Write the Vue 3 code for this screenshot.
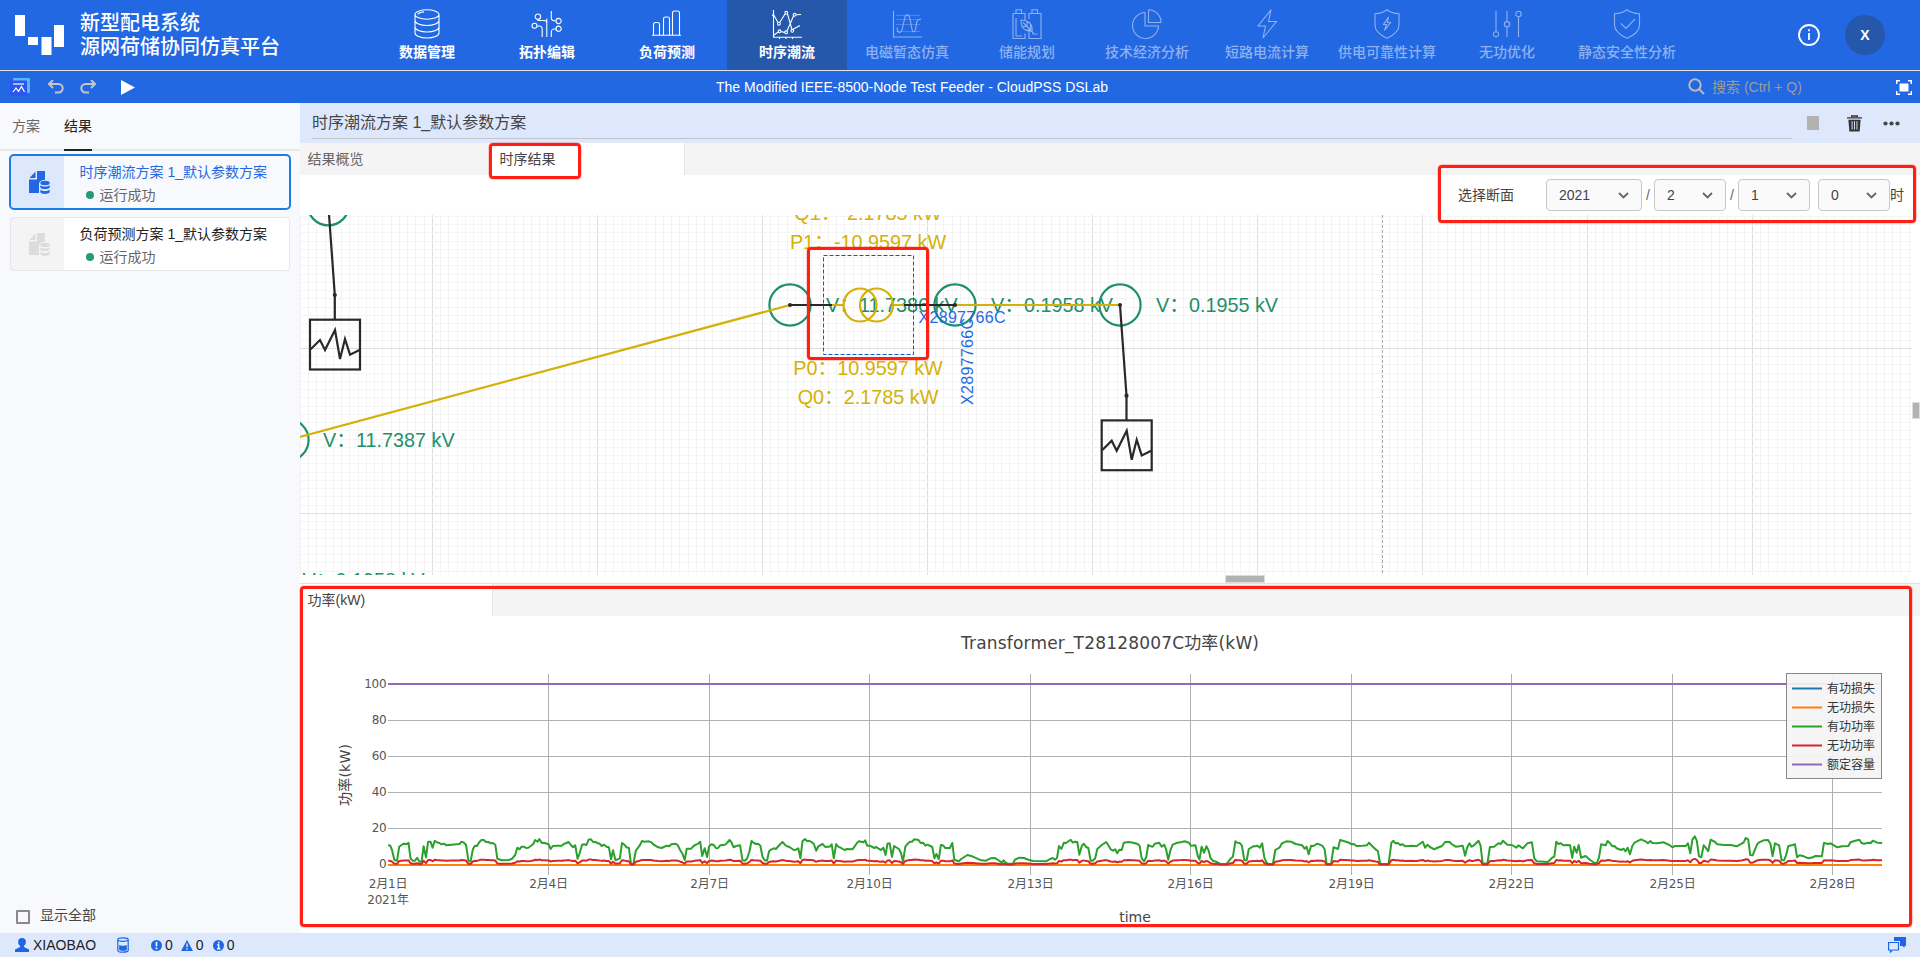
<script setup>
const modules = [
  { name: '数据管理', icon: 'database', on: true },
  { name: '拓扑编辑', icon: 'topology', on: true },
  { name: '负荷预测', icon: 'bars', on: true },
  { name: '时序潮流', icon: 'flow', on: true, active: true },
  { name: '电磁暂态仿真', icon: 'wave' },
  { name: '储能规划', icon: 'battery' },
  { name: '技术经济分析', icon: 'pie' },
  { name: '短路电流计算', icon: 'bolt' },
  { name: '供电可靠性计算', icon: 'shieldBolt' },
  { name: '无功优化', icon: 'sliders' },
  { name: '静态安全性分析', icon: 'shieldCheck' },
]

const icons = {
  database: 'M3 5.5a12 4.7 0 0 1 24 0a12 4.7 0 0 1-24 0V24a12 5 0 0 0 24 0V5.5M3 11.5a12 5 0 0 0 24 0M3 18a12 5 0 0 0 24 0M6 5.5a9 3 0 0 1 6-2.6',
  topology: 'M8.6 7.7a2.7 2.7 0 1 1-5.4 0a2.7 2.7 0 1 1 5.4 0M29.2 12a2.6 2.6 0 1 1-5.2 0a2.6 2.6 0 1 1 5.2 0M5 16.7a2.5 2.5 0 1 1-5 0a2.5 2.5 0 1 1 5 0M29.2 19.7a2.6 2.6 0 1 1-5.2 0a2.6 2.6 0 1 1 5.2 0M14.8 9.5V28M5.900 10.400V11.500H12Q14.800 11.500 14.800 14M19.3 2V9c0 2 1 3 4.7 3M24 19.7c-4 0-4.7 1-4.7 3.5V28M5 16.7c4.5 0 5.2 1 5.2 4V28',
  bars: 'M0 26.3H29M1.5 26V15.5a2 2 0 0 1 2-2h2a2 2 0 0 1 2 2V26M11.5 26V10a2 2 0 0 1 2-2h2a2 2 0 0 1 2 2V26M20.5 26V4a2 2 0 0 1 2-2h3a2 2 0 0 1 2 2V26',
  flow: 'M1.5 1V28.3H30M7.5 28v2M14 28v2M20.5 28v2M0 6.5L1.5 5.5L6 13.5M8 13L13 5M15.5 5.2L20 20.5M21 20.3L28 16.5M2 26L7 22.5M9 22.5L13 23.6M15 22L21.5 7M24 5.7L29 5.5M8.3 14.7a1.4 1.4 0 1 1-2.8 0a1.4 1.4 0 1 1 2.8 0M15.7 3.8a1.4 1.4 0 1 1-2.8 0a1.4 1.4 0 1 1 2.8 0M21.7 21.8a1.4 1.4 0 1 1-2.8 0a1.4 1.4 0 1 1 2.8 0M24 5.7a1.4 1.4 0 1 1-2.8 0a1.4 1.4 0 1 1 2.8 0M9 22.3a1.4 1.4 0 1 1-2.8 0a1.4 1.4 0 1 1 2.8 0M15.5 23.3a1.4 1.4 0 1 1-2.8 0a1.4 1.4 0 1 1 2.8 0',
  wave: 'M1.5 2V28H30M5 18.500C5.500 25 9.500 25 10.500 19L12.500 10C13.500 4.500 17 4.500 18 10L19.500 18C20.500 24.500 23 24.500 24 18C24.500 11 26 10.300 29 10.300',
  battery: 'M1 4.5h12v7M1 4.5V29.5h12v-5M4 4.5V.8h5.5v3.7M17 10V4.5h12V29.5H17V22M20 4.5V.8h5.5v3.7M4 9v18h6M20 25h5.5M9 11c6 0 12 3 11 11c-8 1-11-4-11-11M11 13.5L21.5 24M15 12v5.5M10 17.5h5.5M18.5 16v5M14 21h5',
  pie: 'M13 3.5A13 13 0 1 0 26.5 17H13ZM16.5 .8V13.5H29A12.5 12.5 0 0 0 16.5 .8',
  bolt: 'M19 .8L6 17h7.5L11 29L24.5 12.5H16.5Z',
  shieldBolt: 'M15 .8C19 4 23 4.5 27 4.8V16c0 6-6 10.5-12 13.3C9 26.500 3 22 3 16V4.8C7 4.500 11 4 15 .8ZM16.500 8L11.500 15.500h3L12.500 21.500L18.500 13.500h-3.200Z',
  sliders: 'M4 2V23M6.600 25.300a2.600 2.600 0 1 1-5.200 0a2.600 2.600 0 1 1 5.200 0M15 2V12.500M15 18V28M17.700 15.300a2.700 2.700 0 1 1-5.400 0a2.700 2.700 0 1 1 5.400 0M26.500 7.700V28M29.200 5a2.700 2.700 0 1 1-5.400 0a2.700 2.700 0 1 1 5.400 0',
  shieldCheck: 'M15 .8C19 4 23 4.500 27.500 4.800V16c0 6-6 10.500-12.500 13.300C9 26.500 2.500 22 2.500 16V4.800C7 4.500 11 4 15 .8ZM9 14.500L14 19.500L23 10',
}

const plans = [
  { name: '时序潮流方案 1_默认参数方案', status: '运行成功', active: true },
  { name: '负荷预测方案 1_默认参数方案', status: '运行成功' },
]

// Canvas grid: 8.25px minor cells, a major line every 20 cells.
const cell = 8.25
const gridX = []
for (let k = -16; 432.4 + k * cell < 1912; k++) {
  gridX.push({ p: Math.floor(432.4 + k * cell) + 0.5, major: k % 20 === 0 })
}
const gridY = []
for (let k = -16; 348.4 + k * cell < 575; k++) {
  gridY.push({ p: Math.floor(348.4 + k * cell) + 0.5, major: k % 20 === 0 })
}
const loads = [
  { x: 0, y: 0 },
  { x: 791.7, y: 100.7 },
]

// Power samples: x, y pairs per recording block, with the block's own origin.
const blocks = [
  { ox: 300, oy: 640, d: '256,615 262,617 267,630 274,660 282,662 288,620 295,615 301,611 312,612 315,608 321,655 327,662 334,662 340,653 347,665 353,665 359,619 366,652 372,605 379,605 385,623 391,602 397,607 405,609 411,613 418,611 425,616 440,614 463,612 469,605 476,608 482,614 489,662 495,665 502,628 508,617 514,618 521,606 527,600 534,600 540,606 547,606 554,610 560,609 567,614 573,656 586,661 606,660 616,656 625,645 631,623 638,628 643,620 650,620 656,624 663,623 670,618 677,612 683,600 690,605 695,597 702,609 708,608 722,613 728,627 734,618 747,617 760,617 767,611 774,609 780,606 786,614 793,622 799,616 806,656 812,640 819,614 825,613 832,615 838,599 845,598 851,606 857,606 864,609 870,611 876,618 883,614 890,620 897,622 903,658 909,631 916,661 922,658 929,655 935,609 942,614 948,622 955,624 961,672 968,672 975,632 986,617 993,603 1000,605 1013,604 1020,607 1026,613 1040,622 1050,624 1065,617 1072,619 1078,613 1091,611 1097,616 1104,631 1110,640 1117,660 1123,626 1136,626 1143,618 1150,614 1156,611 1162,605 1168,648 1175,625 1182,651 1188,619 1195,613 1202,616 1208,625 1214,624 1220,616 1234,614 1240,609 1247,600 1253,607 1259,622 1266,618 1278,616 1285,661 1292,662 1298,656 1305,635 1311,603 1318,609 1324,612 1330,611 1337,617 1343,650 1349,661 1356,662 1362,634 1369,628 1376,625 1382,627 1395,612 1401,606 1408,614 1414,619 1421,621 1434,630 1440,629 1447,625 1453,655 1459,604 1466,597 1472,603 1480,603 1486,607 1492,612 1499,632 1505,619 1512,615 1518,612 1525,621 1531,620 1538,620 1544,613 1550,655 1557,612 1564,621' },
  { ox: 840, oy: 640, d: '0,622 13,630 20,627 36,628 42,620 49,609 55,604 68,607 73,601 79,617 86,617 100,624 106,621 112,626 119,630 126,623 132,645 138,611 144,610 151,650 157,618 171,627 177,639 183,665 190,619 196,612 203,605 209,605 216,598 228,600 234,609 241,608 248,617 254,614 268,621 274,655 280,642 287,657 293,615 299,616 306,624 319,624 326,609 332,659 345,664 352,657 370,645 384,649 410,661 424,662 437,655 450,654 463,663 469,668 475,661 482,669 488,671 502,671 508,659 521,653 534,654 547,659 560,663 598,664 612,656 618,654 624,659 630,654 636,618 643,627 650,608 656,609 670,599 676,608 682,605 689,606 695,644 702,618 708,611 715,621 721,624 728,662 734,662 741,655 747,627 760,615 773,606 779,616 786,628 793,632 799,628 805,640 811,629 818,630 824,608 838,606 851,608 864,612 870,617 876,655 883,664 889,652 895,615 902,619 908,620 914,611 927,608 934,620 941,614 947,628 953,659 960,629 966,614 980,608 993,606 1000,604 1013,608 1019,617 1032,616 1039,648 1044,659 1050,620 1057,638 1064,619 1070,631 1076,655 1083,662 1096,667 1103,671 1122,672 1135,655 1141,650 1148,604 1154,608 1161,609 1167,617 1174,661 1181,661 1187,627 1200,619 1206,619 1212,617 1219,623 1226,610 1232,653 1238,667 1244,672 1257,672 1264,630 1277,622 1283,610 1296,604 1310,605 1323,612 1342,616 1349,626 1355,620 1361,643 1368,617 1375,618 1386,611 1400,617 1407,627 1413,672 1426,672 1433,622 1446,627 1452,600 1465,604 1478,608 1485,613 1492,612 1500,618 1517,617 1530,616 1536,608 1543,616 1556,629 1562,633 1567,665' },
  { ox: 1380, oy: 560, d: '2,912 25,911 33,848 39,842 44,850 52,849 59,855 66,853 73,859 93,857 99,858 106,859 124,845 131,863 138,854 145,861 158,868 165,864 180,858 189,846 202,846 208,852 220,860 240,857 247,887 253,863 260,850 266,860 273,856 286,842 292,857 298,910 312,911 319,861 331,860 344,850 351,852 357,842 370,854 383,855 396,863 402,856 415,865 428,850 441,847 448,895 455,904 487,906 500,893 506,890 512,845 518,852 525,850 532,856 545,855 552,856 558,893 564,860 571,878 577,855 584,893 597,888 610,900 623,909 630,908 636,893 642,853 655,856 661,843 668,850 675,859 681,858 687,865 700,870 707,866 713,874 719,863 726,883 733,857 739,848 758,838 771,844 778,850 785,843 791,849 804,850 824,847 840,855 850,862 856,858 888,858 894,850 901,880 907,839 914,829 920,842 926,888 933,892 940,856 946,863 953,874 960,839 973,846 979,853 999,855 1018,855 1036,859 1050,851 1056,847 1062,834 1069,838 1075,885 1082,886 1095,853 1101,847 1114,841 1127,840 1134,852 1140,888 1147,850 1159,856 1166,901 1173,901 1179,886 1186,858 1199,855 1205,853 1211,892 1218,886 1231,889 1244,895 1257,892 1263,888 1283,889 1289,849 1302,852 1308,850 1328,862 1341,859 1360,858 1366,847 1380,842 1392,839 1398,849 1405,851 1418,848 1425,849 1431,842 1444,848 1458,849' },
]
const zeroY = 864.6
const samples = blocks.flatMap((b) =>
  b.d.split(' ').map((pair) => {
    const [x, y] = pair.split(',').map(Number)
    return [b.ox + x / 2.9037, b.oy + y / 3]
  }),
)
const toPoints = (k) =>
  samples.map(([x, y]) => `${x.toFixed(1)},${(zeroY - (zeroY - y) * k).toFixed(1)}`).join(' ')
const activePower = toPoints(1)
const reactivePower = toPoints(0.2)

const yTicks = [
  { v: 0, y: 864.5 }, { v: 20, y: 828.5 }, { v: 40, y: 792.5 },
  { v: 60, y: 756.5 }, { v: 80, y: 720.5 }, { v: 100, y: 684.5 },
]
const xTicks = [
  { t: '2月4日', x: 548.5 }, { t: '2月7日', x: 709.5 }, { t: '2月10日', x: 869.5 },
  { t: '2月13日', x: 1030.5 }, { t: '2月16日', x: 1190.5 }, { t: '2月19日', x: 1351.5 },
  { t: '2月22日', x: 1511.5 }, { t: '2月25日', x: 1672.5 }, { t: '2月28日', x: 1832.5 },
]
const legend = [
  { t: '有功损失', c: '#1f77b4' }, { t: '无功损失', c: '#ff7f0e' }, { t: '有功功率', c: '#2ca02c' },
  { t: '无功功率', c: '#d62728' }, { t: '额定容量', c: '#9467bd' },
]
</script>

<template>
  <div class="app">
    <header class="top">
      <div class="brand">
        <svg class="logo" width="50" height="41" viewBox="0 0 50 41" fill="#fff">
          <rect x="0" y="0" width="10" height="21" /><rect x="13" y="22" width="10" height="8" />
          <rect x="26.500" y="22" width="10" height="18" /><rect x="39" y="10" width="10" height="22" />
        </svg>
        <div class="brand-text"><div>新型配电系统</div><div>源网荷储协同仿真平台</div></div>
      </div>
      <nav class="modules">
        <div v-for="m in modules" :key="m.name" class="module" :class="{ on: m.on, active: m.active }">
          <svg width="30" height="30" viewBox="0 0 30 30">
            <path v-if="m.icon === 'wave'" class="faint" d="M4 6.500h24M4 10.500h24M4 15.500h24M4 22.500h24" />
            <path :d="icons[m.icon]" />
          </svg>
          <span>{{ m.name }}</span>
        </div>
      </nav>
      <div class="top-right">
        <svg width="24" height="24" viewBox="0 0 24 24" fill="none" stroke="#fff" stroke-width="1.800">
          <circle cx="12" cy="12" r="10" /><path d="M12 10v7M12 6.300v2" />
        </svg>
        <div class="avatar">X</div>
      </div>
    </header>

    <div class="toolbar">
      <div class="tools">
        <svg width="20" height="18" viewBox="0 0 20 18">
          <rect x="3" y="0" width="17" height="15" rx="1" fill="#58b6fb" />
          <rect x="0" y="2.500" width="17" height="15.500" rx="1" fill="#2c56f0" />
          <path d="M3 6h11" stroke="#fff" stroke-width="1.200" />
          <path d="M3 14L6 10L8.500 13.500L11.500 8.500L14.500 14" fill="none" stroke="#fff" stroke-width="1.200" />
        </svg>
        <svg class="undo" width="16" height="14" viewBox="0 0 16 14"><path d="M5 0L1 4L5 8M1 4H10.500a4.200 4.200 0 0 1 0 8.400H7" /></svg>
        <svg class="redo" width="16" height="14" viewBox="0 0 16 14"><path d="M11 0L15 4L11 8M15 4H5.500a4.200 4.200 0 0 0 0 8.400H9" /></svg>
        <svg width="14" height="15" viewBox="0 0 14 15"><path d="M0 0L14 7.500L0 15Z" fill="#fff" /></svg>
      </div>
      <div class="doc-title">The Modified IEEE-8500-Node Test Feeder - CloudPSS DSLab</div>
      <div class="tools-right">
        <div class="search">
          <svg width="17" height="17" viewBox="0 0 17 17" fill="none" stroke="#b9b9b9" stroke-width="2"><circle cx="7" cy="7" r="5.700" /><path d="M11 11L16 16" /></svg>
          <span>搜索 (Ctrl + Q)</span>
        </div>
        <svg width="16" height="15" viewBox="0 0 16 15">
          <rect x="3.500" y="3.500" width="9" height="8" fill="#fff" />
          <path d="M.7 4V.7H4M12 .7h3.300V4M15.300 11v3.300H12M4 14.300H.7V11" fill="none" stroke="#fff" stroke-width="1.400" />
        </svg>
      </div>
    </div>

    <div class="body">
      <aside class="side">
        <div class="side-tabs"><span>方案</span><span class="current">结果</span></div>
        <div class="plans">
          <div v-for="p in plans" :key="p.name" class="plan" :class="{ active: p.active }">
            <div class="plan-icon">
              <svg width="21" height="24" viewBox="0 0 21 24" fill="currentColor">
                <path d="M8 0H16V8.800C12 9.200 10 10.500 10 13V22H0V8.500H8Z" /><path d="M6.500 0.500V7H0.500Z" />
                <ellipse cx="16" cy="12" rx="4.700" ry="2.200" />
                <path d="M11.300 14.200c2 1.700 7.400 1.700 9.400 0v2.300c-1.500 2-7.900 2-9.400 0zM11.300 18.700c2 1.700 7.400 1.700 9.400 0v2.600c-1.500 2.200-7.900 2.200-9.400 0z" />
              </svg>
            </div>
            <div class="plan-text">
              <div class="plan-name">{{ p.name }}</div>
              <div class="plan-status"><i></i>{{ p.status }}</div>
            </div>
          </div>
        </div>
        <label class="show-all"><i></i>显示全部</label>
      </aside>

      <main class="main">
        <div class="head">
          <div class="head-title">时序潮流方案 1_默认参数方案</div>
          <i class="stop"></i>
          <svg class="trash" width="15" height="17" viewBox="0 0 16 17"><path d="M5 1.500V.5h6v1M0 2.500h16" fill="none" stroke="#333" stroke-width="1.500" /><path d="M1.500 4.500h13L13.500 17h-11z" fill="#333" /><path d="M5.400 6v9M8 6v9M10.600 6v9" stroke="#dee8fd" stroke-width="1" /></svg>
          <svg class="dots" width="17" height="5" viewBox="0 0 17 5" fill="#444"><circle cx="2.500" cy="2.500" r="2.100" /><circle cx="8.500" cy="2.500" r="2.100" /><circle cx="14.500" cy="2.500" r="2.100" /></svg>
        </div>
        <div class="tabs">
          <div class="tab">结果概览</div>
          <div class="tab current">时序结果<b class="mark mark-tab"></b></div>
        </div>
        <div class="picker">
          <span class="picker-label">选择断面</span>
          <div class="select wide">2021<svg width="11" height="7" viewBox="0 0 11 7"><path d="M1 1L5.500 5.500L10 1" /></svg></div>
          <span class="slash">/</span>
          <div class="select">2<svg width="11" height="7" viewBox="0 0 11 7"><path d="M1 1L5.500 5.500L10 1" /></svg></div>
          <span class="slash">/</span>
          <div class="select">1<svg width="11" height="7" viewBox="0 0 11 7"><path d="M1 1L5.500 5.500L10 1" /></svg></div>
          <div class="select hour">0<svg width="11" height="7" viewBox="0 0 11 7"><path d="M1 1L5.500 5.500L10 1" /></svg></div>
          <span class="unit">时</span>
          <b class="mark mark-picker"></b>
        </div>

        <div class="canvas-row">
          <svg class="canvas" width="1612" height="360" viewBox="300 215 1612 360">
            <g stroke-width="1">
              <line v-for="g in gridX" :key="'x' + g.p" :x1="g.p" :x2="g.p" y1="215" y2="575" :stroke="g.major ? '#e0e0e0' : '#f4f4f4'" />
              <line v-for="g in gridY" :key="'y' + g.p" :y1="g.p" :y2="g.p" x1="300" x2="1912" :stroke="g.major ? '#e0e0e0' : '#f4f4f4'" />
              <line x1="1382.500" x2="1382.500" y1="215" y2="575" stroke="#aaa" stroke-dasharray="3 2" />
            </g>
            <g fill="none" stroke="#1f8f6a" stroke-width="2.200">
              <circle cx="328.300" cy="204.800" r="20.600" /><circle cx="288" cy="440" r="20.600" />
              <circle cx="790" cy="305" r="20.600" /><circle cx="955" cy="305" r="20.600" /><circle cx="1120" cy="305" r="20.600" />
            </g>
            <g class="volt">
              <text x="323" y="447">V：11.7387 kV</text><text x="826" y="312">V：11.7386 kV</text>
              <text x="991" y="312">V：0.1958 kV</text><text x="1156" y="312">V：0.1955 kV</text>
              <text x="302.500" y="587">V：0.1958 kV</text>
            </g>
            <g fill="none" stroke="#d4b106" stroke-width="2.200">
              <path d="M288 440L790 305M832 305H843M893 305H904M955 305H1120" />
              <circle cx="860" cy="305" r="16.500" /><circle cx="876.500" cy="305" r="16.500" />
            </g>
            <g fill="none" stroke="#292929" stroke-width="2.200">
              <path d="M790 305H832M904 305H955" />
              <g v-for="l in loads" :key="l.x" :transform="`translate(${l.x} ${l.y})`">
                <path d="M328.300 204.500L334.800 295V320" /><circle cx="334.800" cy="295" r="1" />
                <rect x="310" y="319.700" width="50" height="49.800" />
                <path d="M310.700 349.300L320 340L325 350L335 330L340 359L345 339L350 354.700L359.500 350" />
              </g>
            </g>
            <g fill="#292929"><circle cx="790" cy="305" r="2" /><circle cx="955" cy="305" r="2" /><circle cx="1120" cy="305" r="2" /></g>
            <g class="power">
              <text x="868" y="219.500">Q1：-2.1785 kW</text><text x="868" y="248.500">P1：-10.9597 kW</text>
              <text x="868" y="375">P0：10.9597 kW</text><text x="868" y="404">Q0：2.1785 kW</text>
            </g>
            <g class="ident">
              <text x="918.500" y="323" textLength="87">X2897766C</text>
              <text transform="translate(973 405) rotate(-90)" textLength="87">X2897766C</text>
            </g>
            <rect x="823.500" y="255.500" width="90" height="99" fill="none" stroke="#1059b8" stroke-dasharray="4 2" />
          </svg>
          <i class="grip-v"></i>
          <b class="mark mark-device"></b>
        </div>
        <div class="splitter"><i></i></div>

        <section class="result">
          <div class="tabs"><div class="tab current">功率(kW)</div></div>
          <svg class="chart" width="1620" height="317" viewBox="300 616 1620 317">
            <g stroke="#b0b0b0" stroke-width="1">
              <line v-for="t in xTicks" :key="t.t" :x1="t.x" :x2="t.x" y1="674" y2="875" />
              <line v-for="t in yTicks" :key="t.v" x1="388" x2="1882" :y1="t.y" :y2="t.y" />
            </g>
            <g fill="none" stroke-width="2" stroke-linejoin="round">
              <path d="M388 865H1882" stroke="#ff7f0e" />
              <polyline :points="activePower" stroke="#2ca02c" />
              <polyline :points="reactivePower" stroke="#d62728" />
              <path d="M388 684H1882" stroke="#9467bd" />
            </g>
            <g class="tick">
              <text v-for="t in yTicks" :key="t.v" x="386.500" :y="t.y + 3.500" text-anchor="end">{{ t.v }}</text>
              <g text-anchor="middle">
                <text x="388" y="888">2月1日</text><text x="388" y="904">2021年</text>
                <text v-for="t in xTicks" :key="t.t" :x="t.x" y="888">{{ t.t }}</text>
              </g>
            </g>
            <g class="axis">
              <text x="1110" y="649" class="chart-title" textLength="298">Transformer_T28128007C功率(kW)</text>
              <text x="1135" y="922">time</text>
              <text transform="translate(349.500 775) rotate(-90)" textLength="62">功率(kW)</text>
            </g>
            <rect x="1786.500" y="673.500" width="95" height="105" fill="#f4f4f4" fill-opacity=".92" stroke="#888" />
            <g v-for="(l, i) in legend" :key="l.t" class="legend">
              <line x1="1792" x2="1822" :y1="688.500 + i * 19" :y2="688.500 + i * 19" :stroke="l.c" stroke-width="2" />
              <text x="1827" :y="693 + i * 19">{{ l.t }}</text>
            </g>
          </svg>
          <b class="mark mark-result"></b>
        </section>
      </main>
    </div>

    <footer class="status">
      <svg width="14" height="14" viewBox="0 0 14 14" fill="#1f66e5"><circle cx="7" cy="4" r="3.900" /><path d="M5 7h4v2l5 2.500V14H0v-2.500L5 9z" /></svg>
      <span class="user">XIAOBAO</span>
      <svg class="store" width="12" height="16" viewBox="0 0 12 16" fill="none" stroke="#1f66e5" stroke-width="1.200"><path d="M.8 2.600a5.200 1.800 0 0 1 10.400 0a5.200 1.800 0 0 1-10.400 0V13.400a5.200 1.800 0 0 0 10.400 0V2.600" /><path d="M2.800 8.800c2.200.8 4.200.8 6.400 0V12.600c-2 .8-4.400.8-6.400 0z" fill="#1f66e5" /></svg>
      <svg class="err" width="11" height="11" viewBox="0 0 11 11"><circle cx="5.500" cy="5.500" r="5.500" fill="#1f66e5" /><path d="M5.500 2v4.300M5.500 7.500v1.700" stroke="#fff" stroke-width="1.700" /></svg><span>0</span>
      <svg class="warn" width="12" height="11" viewBox="0 0 12 11"><path d="M6 0L12 11H0Z" fill="#1f66e5" /><path d="M6 3.500v3.700M6 8.300v1.400" stroke="#dee8fd" stroke-width="1.400" /></svg><span>0</span>
      <svg class="info" width="11" height="11" viewBox="0 0 11 11"><circle cx="5.500" cy="5.500" r="5.500" fill="#1f66e5" /><path d="M5.700 1.800v1.700M4 4.900h1.700V8.700M4 8.700h3.400" fill="none" stroke="#fff" stroke-width="1.400" /></svg><span>0</span>
      <svg class="chat" width="18" height="16" viewBox="0 0 18 16"><path d="M6 0H18V9H16.500V11L14.500 9H12V4H6Z" fill="#1f66e5" /><path d="M.6 5.500H10.500V13H4.500L2.500 15V13H.6Z" fill="none" stroke="#1f66e5" stroke-width="1.200" /></svg>
    </footer>
  </div>
</template>

<style>
body { margin: 0; overflow: hidden; }
</style>

<style scoped>
.app { width: 1920px; height: 957px; display: flex; flex-direction: column; overflow: hidden; background: #fff; color: #333; font: 14px/20px "Liberation Sans", "Noto Sans CJK SC", sans-serif; }
.app * { box-sizing: border-box; }
svg { display: block; flex: none; }
.top { height: 71px; flex: none; display: flex; background: #2168e2; border-bottom: 1px solid #dfe3e6; color: #fff; }
.brand { width: 368px; flex: none; display: flex; padding: 15px 0 0 15px; }
.brand-text { margin: -4px 0 0 15px; font-size: 20px; line-height: 24px; font-weight: 500; white-space: nowrap; }
.modules { display: flex; margin-left: -1px; }
.module { width: 120px; height: 70px; padding-top: 9px; display: flex; flex-direction: column; align-items: center; color: #8eb1f1; white-space: nowrap; font-weight: 500; }
.module svg { overflow: visible; }
.module path { fill: none; stroke: currentColor; stroke-width: 1.1; }
.module path.faint { stroke-width: .8; opacity: .5; }
.module span { margin-top: 3px; }
.module.on { color: #fff; font-weight: 700; }
.module.active { background: #2558ab; }
.top-right { flex: 1; display: flex; align-items: center; gap: 24px; padding-left: 110px; }
.avatar { width: 40px; height: 40px; border-radius: 50%; background: #2558ab; display: grid; place-items: center; font-size: 14px; font-weight: 700; }
.toolbar { height: 32px; flex: none; display: flex; align-items: center; background: #2168e2; color: #fff; }
.tools { width: 716px; display: flex; align-items: center; padding-left: 10px; }
.undo { margin-left: 18px; }
.redo { margin: 0 25px 0 16px; }
.undo path, .redo path { fill: none; stroke: #c3c7cc; stroke-width: 2; }
.doc-title { white-space: nowrap; width: 392px; text-align: center; }
.tools-right { margin-left: auto; padding-right: 8px; display: flex; align-items: center; gap: 16px; }
.search { width: 192px; height: 26px; display: flex; align-items: center; gap: 7px; border-bottom: 1px solid #5f6368; color: #9c9c9c; }
.body { flex: 1; min-height: 0; display: flex; }
.side { width: 300px; background: #f8f9fd; display: flex; flex-direction: column; }
.side-tabs { height: 48px; display: flex; gap: 24px; padding-left: 12px; border-bottom: 2px solid #e8e8e8; line-height: 46px; color: #666; }
.side-tabs .current { height: 48px; color: #222; border-bottom: 2px solid #222; }
.plans { padding: 4px 10px; display: flex; flex-direction: column; gap: 8px; }
.plan { height: 54px; display: flex; background: #fff; outline: 1px solid #e6e6e6; outline-offset: -1px; border-radius: 4px; overflow: hidden; color: #222; }
.plan-icon { width: 54px; background: #f4f4f4; color: #dcdcdc; display: flex; align-items: center; justify-content: center; }
.plan-icon svg { margin-left: 4px; margin-top: 1px; }
.plan-text { padding: 7px 0 0 15.5px; white-space: nowrap; }
.plan-status { margin-top: 3px; display: flex; align-items: center; padding-left: 6px; color: #666; }
.plan-status i { width: 8px; height: 8px; border-radius: 50%; background: #26997a; margin-right: 6px; }
.plan.active { background: #f8f9fd; outline: 2px solid #1f7be6; outline-offset: -1px; }
.plan.active .plan-icon { background: #dee8fd; color: #2168e2; }
.plan.active .plan-name { color: #2168e2; }
.show-all { margin-top: auto; height: 34px; padding-left: 16px; display: flex; gap: 10px; color: #444; line-height: 33px; }
.show-all i { width: 14px; height: 14px; margin-top: 11px; border: 2px solid #8a8a8a; border-radius: 1px; }
.main { width: 1620px; display: flex; flex-direction: column; background: #fff; }
.head { height: 40px; flex: none; padding-left: 12px; display: flex; align-items: center; background: #dee8fd; }
.head-title { width: 1480px; height: 32px; margin-top: -1px; border-bottom: 1px solid #c2c4c8; font-size: 16px; line-height: 32px; color: #444; }
.stop { width: 12px; height: 14px; margin-left: 15px; background: #b2b2b2; }
.trash { margin-left: 28px; }
.dots { margin-left: 21px; }
.tabs { height: 32px; flex: none; display: flex; background: #f4f4f4; }
.tab { position: relative; width: 192px; padding-left: 7.5px; line-height: 32px; color: #666; }
.tab.current { width: 193px; background: #fff; color: #444; border-right: 1px solid #e6e6e6; }
.mark { position: absolute; border: 3px solid #ff2015; border-radius: 4px; box-shadow: 0 0 0 .5px rgba(255, 32, 21, .4); pointer-events: none; z-index: 2; }
.mark-tab { left: -3px; top: 0; width: 92px; height: 36px; }
.picker { position: relative; height: 40px; flex: none; display: flex; align-items: center; justify-content: flex-end; padding-right: 16px; color: #444; }
.picker-label { margin-right: 32px; }
.select { width: 72px; height: 32px; display: flex; align-items: center; justify-content: space-between; padding: 0 12px; border: 1px solid #c8c8c8; border-radius: 4px; background: #fafafa; }
.select.wide { width: 96px; }
.select.hour { margin-left: 8px; }
.select path { fill: none; stroke: #666; stroke-width: 1.8; }
.slash { width: 12px; text-align: center; color: #666; }
.mark-picker { left: 1138px; top: -10px; width: 478px; height: 58px; }
.canvas-row { position: relative; height: 360px; flex: none; display: flex; align-items: center; }
.grip-v { width: 8px; height: 17px; margin-top: 31px; background: #b2b2b2; border: 1px solid #dedede; }
.mark-device { left: 507px; top: 32px; width: 122px; height: 113px; }
.volt text, .power text { font-size: 19.8px; }
.volt text { fill: #1f8f6a; }
.power text { fill: #d4b106; text-anchor: middle; }
.ident text { font-size: 16px; fill: #1f6ae6; }
.splitter { height: 9px; flex: none; border-bottom: 1px solid #e0e0e0; }
.splitter i { display: block; width: 40px; height: 8px; margin-left: 925px; background: #b2b2b2; border: 1px solid #dedede; }
.result { position: relative; flex: 1; }
.mark-result { left: -.5px; top: 2px; width: 1612px; height: 341px; }
.tick text { font: 12px "DejaVu Sans", "Noto Sans CJK SC", sans-serif; fill: #555; letter-spacing: -.2px; }
.axis text { font: 14px "DejaVu Sans", "Noto Sans CJK SC", sans-serif; fill: #444; text-anchor: middle; }
.axis .chart-title { font-size: 17px; }
.legend text { font-size: 12px; fill: #333; }
.status { height: 24px; flex: none; display: flex; align-items: center; padding: 0 14px 0 15px; background: #dee8fd; color: #222; }
.user { margin-left: 4px; }
.store { margin-left: 21px; }
.err { margin-left: 22px; margin-right: 3px; }
.warn { margin-left: 8px; margin-right: 3px; }
.info { margin-left: 9px; margin-right: 3px; }
.chat { margin-left: auto; }
</style>
